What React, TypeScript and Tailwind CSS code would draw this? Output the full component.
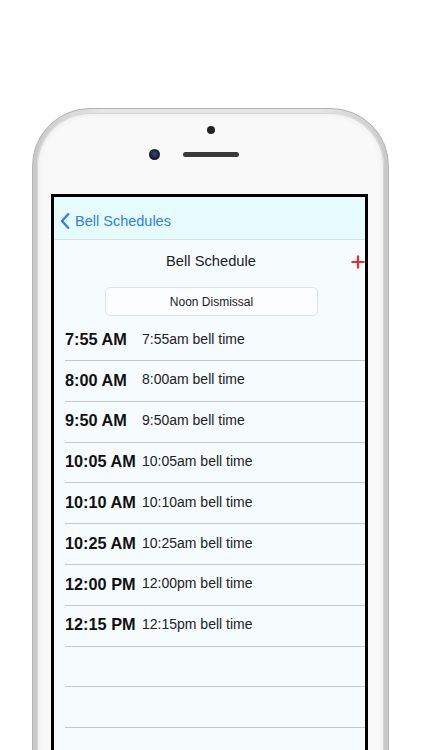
import React from "react";

const rows: [string, string][] = [
  ["7:55 AM", "7:55am bell time"],
  ["8:00 AM", "8:00am bell time"],
  ["9:50 AM", "9:50am bell time"],
  ["10:05 AM", "10:05am bell time"],
  ["10:10 AM", "10:10am bell time"],
  ["10:25 AM", "10:25am bell time"],
  ["12:00 PM", "12:00pm bell time"],
  ["12:15 PM", "12:15pm bell time"],
  ["", ""],
  ["", ""],
  ["", ""],
];

export default function App() {
  return (
    <div className="w-[422px] h-[750px] overflow-hidden bg-white pt-[108px] font-['Liberation_Sans',Arial,sans-serif]">
      <div className="ml-[32px] w-[357px] h-[700px] rounded-[58px] border border-[#b4b4b7] bg-[linear-gradient(to_right,#c9c9cc,#e6e6e8_20%,#e6e6e8_80%,#c9c9cc)] p-[4px]">
        <div className="h-full rounded-[53px] bg-[#f9f9f9] shadow-[inset_0_0_0_1px_#d6d6d8,inset_0_0_6px_#e2e2e4] flex flex-col">
          {/* top sensors */}
          <div className="h-[81px] shrink-0 flex flex-col items-center pt-[13px]">
            <div className="w-[8px] h-[8px] rounded-full bg-[#232325]" />
            <div className="mt-[14px] h-[12px] flex items-center gap-[23px]">
              <div className="w-[11px] h-[11px] rounded-full bg-[radial-gradient(circle_at_50%_45%,#3a4a70,#101420_70%)]" />
              <div className="w-[56px] h-[5px] rounded-full bg-[#3a3a3c]" />
              <div className="w-[11px] h-[11px]" />
            </div>
          </div>
          {/* screen */}
          <div className="ml-[14px] w-[317px] flex-1 border-[3px] border-b-0 border-black bg-[#f6fbfe] overflow-hidden flex flex-col">
            <div className="h-[43px] shrink-0 bg-[#e7fcfe] border-b border-[#d2e2e5] flex items-center pl-[6px] pt-[6px] gap-[5px] text-[#2e80e8]">
              <svg width="10" height="16" viewBox="0 0 10 16" fill="none">
                <path d="M8.2 1.2 L2 8 L8.2 14.8" stroke="#2e80e8" strokeWidth="2.4" strokeLinecap="round" strokeLinejoin="round" />
              </svg>
              <span className="text-[14.5px] leading-none">Bell Schedules</span>
            </div>
            <div className="relative h-[47px] shrink-0 flex items-center justify-center pb-[5px]">
              <span className="text-[14.7px] text-[#1c1c1c] leading-none pl-[3px]">Bell Schedule</span>
              <svg className="absolute left-[297px] top-[15px]" width="14" height="14" viewBox="0 0 14 14">
                <path d="M7 0.5 V13.5 M0.5 7 H13.5" stroke="#ee2b20" strokeWidth="2.2" />
              </svg>
            </div>
            <div className="ml-[51px] w-[213px] h-[29px] shrink-0 border border-[#e0e4e8] rounded-[5px] bg-[#fbfdff] flex items-center justify-center text-[12px] text-[#1c1c1c]">
              Noon Dismissal
            </div>
            <div className="mt-[4.2px] flex flex-col">
              {rows.map(([t, d], i) => (
                <div key={i} className="h-[40.8px] shrink-0 ml-[11px] border-b border-[#c6c8cc] flex items-center pb-[2px] whitespace-nowrap">
                  <span className="w-[77px] shrink-0 font-bold text-[16.3px] text-[#111]">{t}</span>
                  <span className="text-[14px] text-[#222]">{d}</span>
                </div>
              ))}
            </div>
          </div>
        </div>
      </div>
    </div>
  );
}
